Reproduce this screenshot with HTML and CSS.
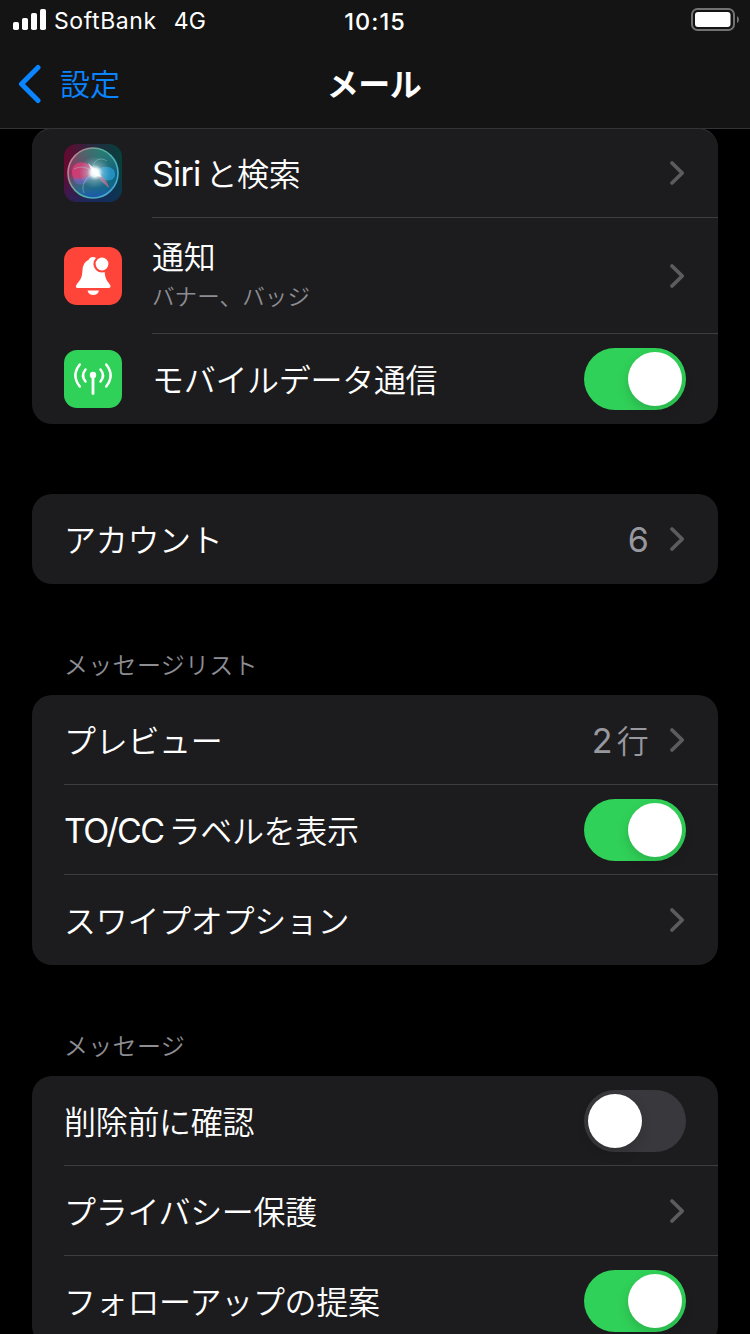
FILE: index.html
```
<!DOCTYPE html>
<html lang="ja">
<head>
  <meta charset="UTF-8">
  <title>メール</title>
  <link rel="stylesheet" href="styles.css">
</head>
<body>
  <svg class="defs" width="0" height="0">
    <symbol id="chevron" viewBox="0 0 16 26">
      <path d="M3 3 L13.200 13 L3 23" fill="none" stroke="#5b5b60" stroke-width="3.8" stroke-linecap="round" stroke-linejoin="round"/>
    </symbol>
  </svg>

  <header>
    <div class="status">
      <div class="carrier">
        <svg width="34" height="22" viewBox="0 0 34 22" fill="#fff">
          <rect x="0" y="13" width="6" height="8" rx="1.8"/>
          <rect x="9" y="9" width="6" height="12" rx="1.8"/>
          <rect x="18" y="4" width="6" height="17" rx="1.8"/>
          <rect x="27" y="0" width="6" height="21" rx="1.8"/>
        </svg>
        <span class="name">SoftBank</span>
        <span class="network">4G</span>
      </div>
      <div class="time">10:15</div>
      <div class="battery">
        <svg width="49" height="24" viewBox="0 0 49 24">
          <rect x="1" y="1" width="42" height="21" rx="5.5" fill="none" stroke="#727272" stroke-width="2"/>
          <rect x="4" y="4" width="35.500" height="15" rx="3" fill="#fff"/>
          <path d="M46 8 Q48 9 48 11.500 Q48 14 46 15 Z" fill="#727272"/>
        </svg>
      </div>
    </div>
    <nav>
      <div class="back">
        <svg width="24" height="40" viewBox="0 0 24 40">
          <path d="M20 3.500 L3.500 20 L20 36.500" fill="none" stroke="#0a84ff" stroke-width="5" stroke-linecap="round" stroke-linejoin="round"/>
        </svg>
        <span>設定</span>
      </div>
      <h1>メール</h1>
    </nav>
  </header>

  <main>
    <section class="card first">
      <div class="row icons">
        <svg class="icon" viewBox="0 0 58 58">
          <defs>
            <linearGradient id="siriBack" x1="0" y1="0" x2="1" y2="0">
              <stop offset="0" stop-color="#680830"/>
              <stop offset="0.5" stop-color="#242a40"/>
              <stop offset="1" stop-color="#07403c"/>
            </linearGradient>
            <linearGradient id="siriLow" x1="0" y1="0" x2="0" y2="1">
              <stop offset="0.5" stop-color="#102a70" stop-opacity="0"/>
              <stop offset="1" stop-color="#102a70" stop-opacity="0.6"/>
            </linearGradient>
            <linearGradient id="siriOrb" x1="0.1" y1="0.3" x2="0.9" y2="0.7">
              <stop offset="0" stop-color="#a02a60"/>
              <stop offset="0.45" stop-color="#3d6575"/>
              <stop offset="1" stop-color="#0a5f80"/>
            </linearGradient>
            <linearGradient id="siriRing" x1="0" y1="0.2" x2="1" y2="0.8">
              <stop offset="0" stop-color="#d87890"/>
              <stop offset="0.45" stop-color="#4fb49a"/>
              <stop offset="1" stop-color="#4aa5dc"/>
            </linearGradient>
            <linearGradient id="siriTop" x1="0" y1="0" x2="0" y2="1">
              <stop offset="0" stop-color="#159070" stop-opacity="0.6"/>
              <stop offset="0.5" stop-color="#159070" stop-opacity="0"/>
              <stop offset="1" stop-color="#1c55b8" stop-opacity="0.9"/>
            </linearGradient>
            <radialGradient id="siriGlow">
              <stop offset="0" stop-color="#fff"/>
              <stop offset="0.25" stop-color="#f4ffff" stop-opacity="0.95"/>
              <stop offset="0.5" stop-color="#c8eef4" stop-opacity="0.35"/>
              <stop offset="1" stop-color="#a0d8e8" stop-opacity="0"/>
            </radialGradient>
          </defs>
          <rect width="58" height="58" rx="13" fill="url(#siriBack)"/>
          <rect width="58" height="58" rx="13" fill="url(#siriLow)"/>
          <circle cx="29" cy="29" r="25" fill="url(#siriOrb)"/>
          <circle cx="29" cy="29" r="25" fill="url(#siriTop)"/>
          <path d="M30 28 C24 14 8 16 8 28 C8 41 21 39 30 28Z" fill="#e83c78" opacity="0.75"/>
          <path d="M9 34 C13 46 24 40 31 29 C21 35 15 35 9 34Z" fill="#6668c0" opacity="0.7"/>
          <path d="M30 29 C38 19 52 22 51 31 C50 39 38 38 30 29Z" fill="#2aa2dc" opacity="0.7"/>
          <path d="M31 29 C39 31 44 38 45 44 C40 40 34 35 31 29Z" fill="#c06890" opacity="0.75"/>
          <path d="M30 28 C27 17 35 12 43 17 M30 29 C20 34 17 43 20 49 M10 25 C18 21 25 24 30 29" fill="none" stroke="#a3dcdf" stroke-width="0.7" opacity="0.6"/>
          <circle cx="31" cy="28.500" r="16" fill="url(#siriGlow)"/>
          <path d="M24 19 L32 26 L38 33 L30 31 Z" fill="#fff" opacity="0.8"/>
          <circle cx="29" cy="29" r="25" fill="none" stroke="url(#siriRing)" stroke-width="1.6"/>
        </svg>
        <span class="label"><span class="en">Siri</span><i></i>と検索</span>
        <svg class="chevron"><use href="#chevron"/></svg>
      </div>
      <div class="row icons tall">
        <svg class="icon" viewBox="0 0 58 58">
          <rect width="58" height="58" rx="13" fill="#ff453a"/>
          <path d="M29 10 C26.500 10 25 11.500 24.500 13 C20.500 15 18.800 18.500 18.500 23 C18 30 17.500 31.500 13 37 C11 39.500 12 41 14 41 H44 C46.500 41 47.500 39.500 45.500 37 C41.500 32 41 30 40.500 23 C40 18.500 37.500 15 33.500 13 C33 11.500 31.500 10 29 10 Z" fill="#fff"/>
          <path d="M23.500 43.500 H35 C34 49.500 24.500 49.500 23.500 43.500Z" fill="#fff"/>
          <circle cx="38" cy="17" r="8.600" fill="#ff453a"/>
          <circle cx="38" cy="17" r="6.400" fill="#fff"/>
        </svg>
        <span class="label">通知<small>バナー、バッジ</small></span>
        <svg class="chevron"><use href="#chevron"/></svg>
      </div>
      <div class="row icons">
        <svg class="icon" viewBox="0 0 58 58">
          <rect width="58" height="58" rx="13" fill="#30d158"/>
          <g fill="none" stroke="#fff" stroke-width="2.5" stroke-linecap="round">
            <path d="M29 26 V43.500" stroke-width="2.800"/>
            <path d="M21.500 19.500 Q16.500 25.500 21.500 31.500 M36.500 19.500 Q41.500 25.500 36.500 31.500"/>
            <path d="M15.800 14.500 Q7 25.500 15.800 36.500 M42.200 14.500 Q51 25.500 42.200 36.500"/>
          </g>
          <circle cx="29" cy="25" r="3.200" fill="#fff"/>
        </svg>
        <span class="label">モバイルデータ通信</span>
        <span class="toggle on"></span>
      </div>
    </section>

    <section class="card account">
      <div class="row">
        <span class="label">アカウント</span>
        <span class="value"><span class="en">6</span></span>
        <svg class="chevron"><use href="#chevron"/></svg>
      </div>
    </section>

    <h2>メッセージリスト</h2>
    <section class="card">
      <div class="row">
        <span class="label">プレビュー</span>
        <span class="value"><span class="en">2</span><i></i>行</span>
        <svg class="chevron"><use href="#chevron"/></svg>
      </div>
      <div class="row">
        <span class="label"><span class="en tight">TO/CC</span><i></i>ラベルを表示</span>
        <span class="toggle on"></span>
      </div>
      <div class="row">
        <span class="label">スワイプオプション</span>
        <svg class="chevron"><use href="#chevron"/></svg>
      </div>
    </section>

    <h2>メッセージ</h2>
    <section class="card">
      <div class="row">
        <span class="label">削除前に確認</span>
        <span class="toggle"></span>
      </div>
      <div class="row">
        <span class="label">プライバシー保護</span>
        <svg class="chevron"><use href="#chevron"/></svg>
      </div>
      <div class="row">
        <span class="label">フォローアップの提案</span>
        <span class="toggle on"></span>
      </div>
    </section>
  </main>
</body>
</html>
```
FILE: styles.css
```
* {
  box-sizing: border-box;
}
body {
  margin: 0;
  height: 1334px;
  overflow: hidden;
  background-color: #000;
  color: #fff;
  font-family: "Noto Sans CJK JP", sans-serif;
  font-weight: 350;
}
svg {
  display: block;
  flex: none;
}
.defs {
  display: none;
}

/* status bar + navigation */
header {
  height: 129px;
  background-color: #141414;
  border-bottom: 1px solid #343436;
}
.status {
  display: grid;
  grid-template-columns: 1fr auto 1fr;
  align-items: center;
  height: 40px;
  padding: 0 10px 0 13px;
  font-family: Inter, sans-serif;
  font-size: 23px;
  font-weight: 400;
}
.carrier {
  display: flex;
  align-items: center;
}
.name {
  margin-left: 7px;
  padding-top: 2px;
  letter-spacing: 0.6px;
}
.network {
  margin-left: 17px;
  padding-top: 2px;
}
.time {
  padding: 2px 3px 0 0;
  font-size: 23.5px;
  font-weight: 550;
  letter-spacing: 1px;
}
.battery {
  justify-self: end;
}
nav {
  display: grid;
  grid-template-columns: 1fr auto 1fr;
  align-items: center;
  height: 88px;
  padding: 0 18px;
}
.back {
  display: flex;
  align-items: center;
  gap: 18px;
  color: #0a84ff;
  font-size: 30px;
}
.back span {
  padding-bottom: 4px;
}
h1 {
  margin: 0;
  padding: 0 2px 4px 0;
  font-size: 32px;
  font-weight: 700;
  letter-spacing: -0.5px;
}

/* lists */
main {
  padding: 0 32px;
}
.card {
  background-color: #1c1c1e;
  border-radius: 20px;
  overflow: hidden;
}
.first {
  margin-top: -1px;
  border-top: 1px solid #343436;
}
.account {
  margin-top: 70px;
}
h2 {
  height: 111px;
  margin: 0;
  padding: 63px 32px 0;
  color: #8d8d93;
  font-size: 24px;
  font-weight: 350;
  line-height: 34px;
  letter-spacing: 0.3px;
}
.row {
  position: relative;
  display: flex;
  align-items: center;
  height: 90px;
  padding: 0 32px;
}
.tall {
  height: 116px;
}
.first .row:first-child {
  height: 89px;
  padding-bottom: 1px;
}
.row:not(:last-child)::after {
  content: "";
  position: absolute;
  left: 32px;
  right: 0;
  bottom: 0;
  height: 1px;
  background-color: #3d3d41;
}
.icons:not(:last-child)::after {
  left: 120px;
}
.icon {
  width: 58px;
  height: 58px;
  margin-right: 30px;
}
.label {
  flex: 1;
  padding-bottom: 2px;
  font-size: 32px;
  line-height: 44px;
  letter-spacing: -0.3px;
}
.tall .label {
  padding-bottom: 6px;
}
.label small {
  display: block;
  color: #8d8d93;
  font-size: 22.5px;
  line-height: 36px;
  letter-spacing: 0.1px;
}
.en {
  font-family: Inter, sans-serif;
  font-size: 34px;
  font-weight: 380;
  line-height: 1;
  letter-spacing: -0.8px;
}
.tight {
  letter-spacing: -1.6px;
}
.label i, .value i {
  display: inline-block;
  width: 5px;
}
.value {
  padding-bottom: 2px;
  color: #98989f;
  font-size: 32px;
  line-height: 44px;
  letter-spacing: -0.8px;
}
.chevron {
  width: 16px;
  height: 26px;
  margin: 0 1px 1px 21px;
}
.toggle {
  width: 102px;
  height: 62px;
  padding: 4px;
  border-radius: 31px;
  background-color: #39393d;
}
.toggle::before {
  content: "";
  display: block;
  width: 54px;
  height: 54px;
  border-radius: 50%;
  background-color: #fff;
  box-shadow: 0 5px 12px rgba(0, 0, 0, 0.15);
}
.on {
  background-color: #30d158;
}
.on::before {
  margin-left: 40px;
}
```
